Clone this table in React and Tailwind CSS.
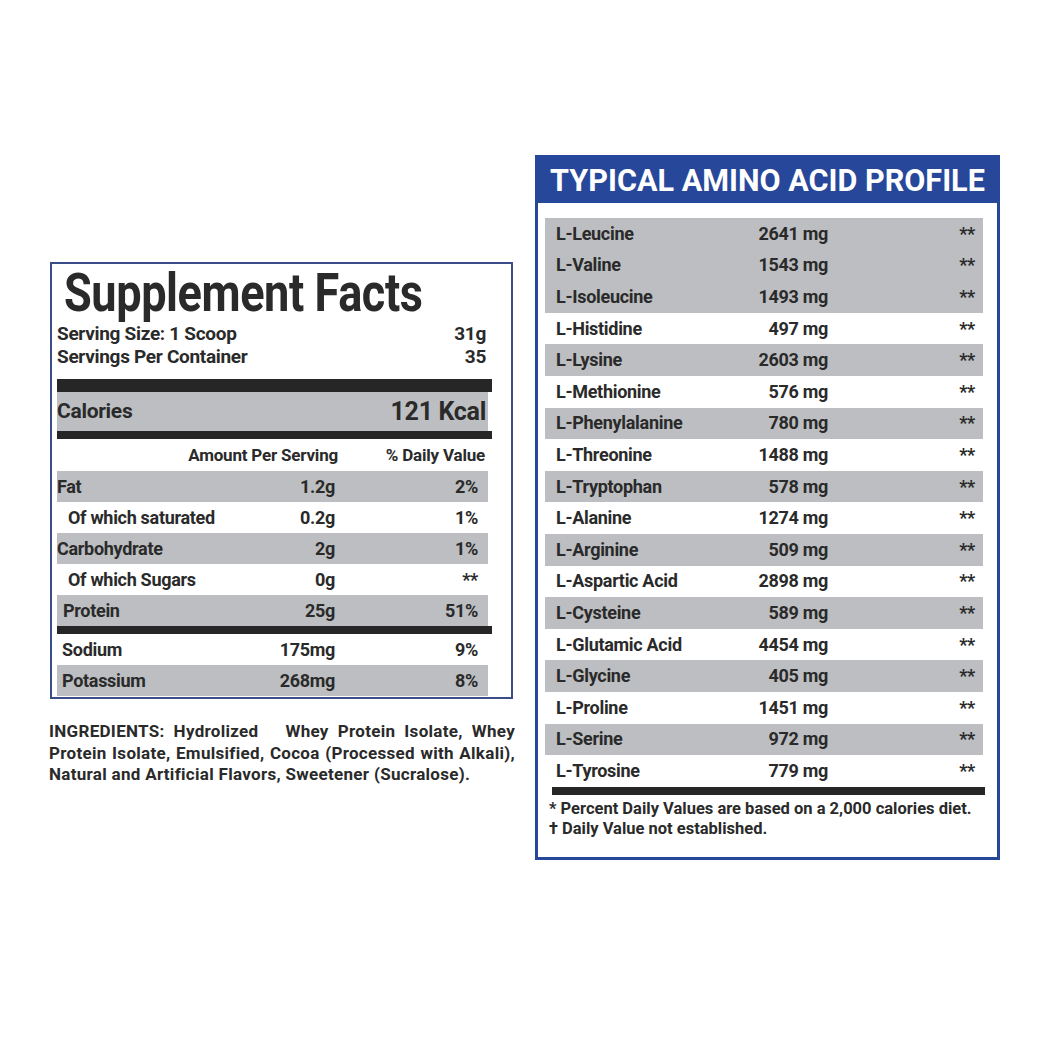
const FONT = { fontFamily: 'Roboto, "Liberation Sans", sans-serif' };

const FACTS = [
  { label: 'Fat', amount: '1.2g', dv: '2%', gray: true, indent: 'pl-0' },
  { label: 'Of which saturated', amount: '0.2g', dv: '1%', gray: false, indent: 'pl-[11px]' },
  { label: 'Carbohydrate', amount: '2g', dv: '1%', gray: true, indent: 'pl-0' },
  { label: 'Of which Sugars', amount: '0g', dv: '**', gray: false, indent: 'pl-[11px]' },
  { label: 'Protein', amount: '25g', dv: '51%', gray: true, indent: 'pl-[6px]' },
];

const MINERALS = [
  { label: 'Sodium', amount: '175mg', dv: '9%', gray: false },
  { label: 'Potassium', amount: '268mg', dv: '8%', gray: true },
];

const AMINOS = [
  ['L-Leucine', '2641 mg', true],
  ['L-Valine', '1543 mg', true],
  ['L-Isoleucine', '1493 mg', true],
  ['L-Histidine', '497 mg', false],
  ['L-Lysine', '2603 mg', true],
  ['L-Methionine', '576 mg', false],
  ['L-Phenylalanine', '780 mg', true],
  ['L-Threonine', '1488 mg', false],
  ['L-Tryptophan', '578 mg', true],
  ['L-Alanine', '1274 mg', false],
  ['L-Arginine', '509 mg', true],
  ['L-Aspartic Acid', '2898 mg', false],
  ['L-Cysteine', '589 mg', true],
  ['L-Glutamic Acid', '4454 mg', false],
  ['L-Glycine', '405 mg', true],
  ['L-Proline', '1451 mg', false],
  ['L-Serine', '972 mg', true],
  ['L-Tyrosine', '779 mg', false],
];

function FactRow({ row, pl }) {
  return (
    <div className={`grid h-[31px] w-[431px] grid-cols-[1fr_100px_143px] items-center whitespace-nowrap pr-[10px] text-[18px] font-bold leading-none tracking-[-0.3px] ${row.gray ? 'bg-[#bcbec1]' : ''}`}>
      <span className={pl || row.indent}>{row.label}</span>
      <span className="text-right">{row.amount}</span>
      <span className="text-right">{row.dv}</span>
    </div>
  );
}

function SupplementFacts() {
  return (
    <div className="mt-[262px] w-[463px]">
      <div className="h-[437px] w-[463px] border-2 border-[#3a4d88] pl-[5px]">
        <h1 className="ml-[7px] mt-[2px] h-[54px] origin-left scale-x-[0.835] whitespace-nowrap text-[54px] font-bold leading-[54px] tracking-[-0.5px]">Supplement Facts</h1>
        <div className="mt-[2px] flex w-[429px] justify-between whitespace-nowrap text-[19px] font-bold leading-[23px] tracking-[-0.3px]">
          <span>Serving Size: 1 Scoop</span>
          <span>31g</span>
        </div>
        <div className="flex w-[429px] justify-between whitespace-nowrap text-[19px] font-bold leading-[23px] tracking-[-0.3px]">
          <span>Servings Per Container</span>
          <span>35</span>
        </div>
        <div className="mt-[11px] h-[13px] w-[435px] bg-[#262626]" />
        <div className="flex h-[39px] w-[431px] items-center justify-between bg-[#bcbec1] pr-[2px] font-bold tracking-[-0.3px]">
          <span className="text-[21px]">Calories</span>
          <span className="text-[25px]">121 Kcal</span>
        </div>
        <div className="h-[8px] w-[435px] bg-[#262626]" />
        <div className="grid h-[32px] w-[431px] grid-cols-[1fr_170px_150px] items-center whitespace-nowrap text-[17px] font-bold leading-none tracking-[-0.2px]">
          <span />
          <span className="text-right">Amount Per Serving</span>
          <span className="pr-[3px] text-right">% Daily Value</span>
        </div>
        {FACTS.map((row) => (
          <FactRow key={row.label} row={row} />
        ))}
        <div className="h-[8px] w-[435px] bg-[#262626]" />
        {MINERALS.map((row) => (
          <FactRow key={row.label} row={row} pl="pl-[5px]" />
        ))}
      </div>
      <div className="-ml-px mt-[22px] w-[466px] whitespace-nowrap text-[17px] font-bold leading-[21.5px] tracking-[0.3px]">
        <p className="text-justify [text-align-last:justify]">INGREDIENTS: Hydrolized&nbsp;&nbsp; Whey Protein Isolate, Whey</p>
        <p className="text-justify [text-align-last:justify]">Protein Isolate, Emulsified, Cocoa (Processed with Alkali),</p>
        <p>Natural and Artificial Flavors, Sweetener (Sucralose).</p>
      </div>
    </div>
  );
}

function AminoProfile() {
  return (
    <div className="mt-[155px] h-[705px] w-[465px] border-[3px] border-[#27479a]">
      <div className="flex h-[45px] items-center justify-center whitespace-nowrap bg-[#27479a] text-[30.6px] font-bold text-white">
        TYPICAL AMINO ACID PROFILE
      </div>
      <div className="ml-[7px] mt-[15px] w-[438px]">
        {AMINOS.map(([name, value, gray]) => (
          <div key={name} className={`grid h-[31.6px] grid-cols-[272px_1fr] items-center whitespace-nowrap pl-[11px] pr-[8px] text-[18px] font-bold leading-none tracking-[-0.3px] ${gray ? 'bg-[#bcbec1]' : ''}`}>
            <div className="flex justify-between">
              <span>{name}</span>
              <span>{value}</span>
            </div>
            <span className="text-right">**</span>
          </div>
        ))}
      </div>
      <div className="ml-[14px] h-[8px] w-[433px] bg-[#262626]" />
      <div className="ml-[11px] mt-[4px] whitespace-nowrap text-[16.5px] font-bold leading-[20px]">
        <p>* Percent Daily Values are based on a 2,000 calories diet.</p>
        <p>† Daily Value not established.</p>
      </div>
    </div>
  );
}

export default function App() {
  return (
    <div className="flex h-[1050px] w-[1050px] items-start gap-[22px] bg-white pl-[50px] text-[#2a2a2a]" style={FONT}>
      <SupplementFacts />
      <AminoProfile />
    </div>
  );
}
